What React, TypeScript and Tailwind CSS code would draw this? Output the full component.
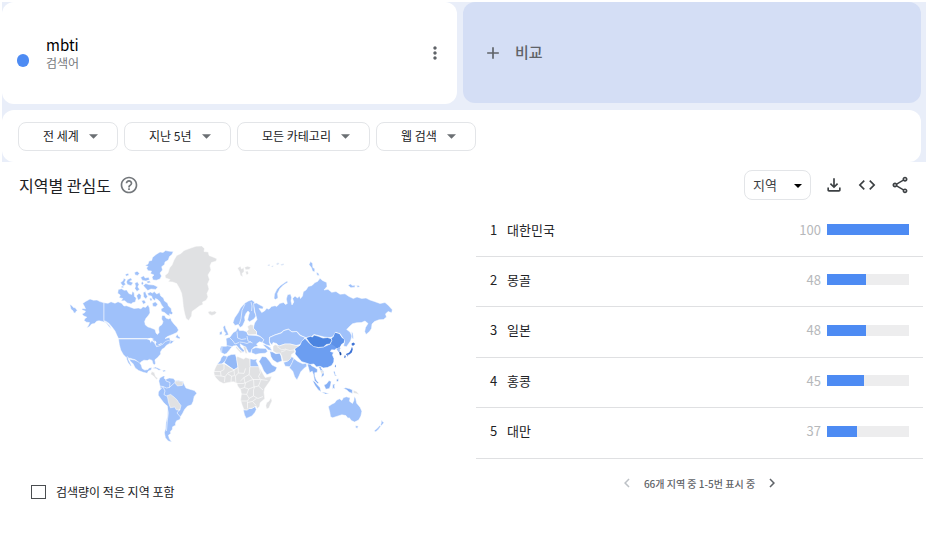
import React from "react";
import {
  MdAdd,
  MdChevronLeft,
  MdChevronRight,
  MdCode,
  MdHelpOutline,
  MdMoreVert,
  MdOutlineFileDownload,
  MdOutlineShare,
} from "react-icons/md";

const FILTERS = [
  { label: "위치", value: "전 세계" },
  { label: "기간", value: "지난 5년" },
  { label: "카테고리", value: "모든 카테고리" },
  { label: "검색 유형", value: "웹 검색" },
];

const REGIONS = [
  { rank: 1, name: "대한민국", score: 100 },
  { rank: 2, name: "몽골", score: 48 },
  { rank: 3, name: "일본", score: 48 },
  { rank: 4, name: "홍콩", score: 45 },
  { rank: 5, name: "대만", score: 37 },
];

function Caret({ className }: { className: string }) {
  return (
    <svg viewBox="0 0 10 5" aria-hidden="true" className={"pointer-events-none absolute " + className}>
      <path d="M0 0h10L5 5z" fill="currentColor" />
    </svg>
  );
}

function FilterSelect({ label, value }: { label: string; value: string }) {
  return (
    <div className="relative">
      <select
        aria-label={label}
        className="h-[29px] appearance-none rounded-lg border border-[#e3e5e8] bg-white pr-[38px] pl-6 text-xs text-[#202124]"
      >
        <option>{value}</option>
      </select>
      <Caret className="top-3 right-5 h-[5px] w-[9px] text-[#6b6f73]" />
    </div>
  );
}

function WorldMap() {
  return (
    <svg viewBox="69 240 328 208" role="img" aria-label="지역별 관심도 지도" className="ml-10 w-[328px]">
      <g fill="#9fc1fa" stroke="#fff" strokeWidth="0.5" strokeLinejoin="round">
        {/* Alaska and the tip of Chukotka */}
        <path d="M82.7 303.5L85.500 301.500 90 299 93.500 300.200 97 300 100 301.600 104 302.700V321.300L106.500 322.500 109.500 325.500 111.500 329 109 326.500 106 322.800 102.500 321.500 99 320.800 96.700 321.200 94.500 323.500 91.700 324 89.500 326.500 86.700 328 88.600 325 89.500 322.600 86.500 322.200 84 320.600 85 318.600 86.800 317.200 83.500 315.800 82 314 84.500 312.800 85.500 311.200 81.800 309.800 82.600 308.400 85.500 308.800 84.200 306z" />
        <path d="M69.800 304.600l2 .8 1.600 2 1.800.4 2.200 2.800-1.200.6-1 2-1.600-.6-.6-1.800-2-1.600z" />
        {/* Canada */}
        <path d="M104 302.700L108 303.300 111 301.800 115 303.200 118 301.800 121.700 303.300 124 306 126.700 305.800 130 307 134 308.500 138.300 308 141 308.800 143 306.700 145.500 307.400 148 304.800 149.600 308 150 313 148 316 146 318.300 144.600 321.500 145.400 325 148 327 150 327.500 152.500 328.600 155 329.400 156 333 157.300 334.400 159.200 332.600 158.600 329 159 326.700 162 324.500 163 321.700 161.600 319 162 315.500 164.500 315.500 166 318 168.500 319 170.500 318 171.700 321 174 324 177 327.300 178.500 330 177 332.500 172.500 334.500 167.500 336.500 165 338.500 169.500 337.500 170.200 340.200 173 341 175 340 171.500 343.600 169 344 169.500 341.800 166.500 342.500 162.500 344.500 158.500 346.400 155.800 345.800 154.500 341.500 151.500 339.500 147 338.600H118.500L117 335.500 115 331 112 327 108.800 323.200 106 321.400 104 320.800z" />
        <path d="M175.500 337.300l1.800-3.300 1 2.200 1.800 1-.4 1.700-2.200-.7z" />
        {/* Arctic archipelago */}
        <path d="M145 265.500L148 264 149 261 151.700 260.400 152.500 257.500 156 254.500 160 252 163 252.500 165.500 250.600 169.500 251.200 173.300 251.500 172 254.500 169.500 256.500 168.300 260 165 262 164.500 264.500 161.700 266.700 162.500 270 160 273 161.500 276 160 279 156.500 280.200 153 280 152 277 154 275 150.500 273.500 151.500 271 148 270.800 146.500 268 148 266.500z" />
        <path d="M118.300 289.500l3.400-.8 2.400 1.600 2.600-.4 2.200 3.600 2.800 1 .6-3 1.800 1 .4 4 1.800 1.400-1 4.200-2.800.6-1.200 1.400-4-1.200-2.600-2.200-3.600.2 1.600-2.400-3.600-.8 1.200-2.600-2.600-1.800z" />
        <path d="M147.500 293.500L150.300 291.900 152.500 293 154.200 291.500 156.700 294 159.500 292.600 160.800 296 163.500 298 164.500 301 167.500 303 168.500 306 171.200 308.500 171.600 311.500 173 313 171.500 314.500 169.500 313.800 170 316 167.500 315 164.500 312.500 161.500 311.500 161 309 163.500 307.500 161.500 305 159.800 301.500 157.500 299.500 155.500 298.500 155 300.800 152.500 298.800 151.500 296 148.500 295.500z" />
        <path d="M120.500 282.800l2.600-2.200.6-2.400 2.200 1.200-1.400 3 1.200 2-2.800 1.800zM127.600 279.500l3.200-1.600 1.400 2-2.600 1.400 3.600 1.400-2.200 3-3.600-1.200-1-2.600zM134.500 272.600l2.600-1.400 2.400 2-1.600 2.200-2.800-.4zM140.600 277.600l3-1.800 1.600 2.200 3.400-.8 1 2.600-3.600 1.200-3.600-.6zM134.800 283.200l2.600-1.400 1.600 2.800-1.200 2.400 1.800 2.200-2.600 2.200-2.200-2.800.8-2.400zM143.200 285.600l2.600-2 3 1 5 .4 4 2-2 2.400-4.800-.4-3.200 1.600-2-2.200zM136.600 295.800l2.400-2.600 2.200 2-.4 3.200-2.600 1.800zM143.200 292.400l2.200-.8.8 2.600 1.400 2.400-1.800 2.400-2.200-2.200zM141.500 300.800l2.800-.8 1.600 2.800-2.600 1.400zM152.200 303.600l3-1.800 2.600 2.400-2 2.600-2.800-.4zM125.200 274.400l2.800-1.200 1 1.800-2.600 1.200z" />
        <path d="M146.500 281.500l3-.8 1.200 1.800-3 .8zM141 283l1.600-1.400 1 2-1.400 1.600zM149.500 298.500l1.800-.6 1 2.400-1.800.6zM121 286.500l2-.6 1 1.400-2 .6z" />
        {/* United States */}
        <path d="M118.500 339h28l4.400.8 3.400 2.800 2.200 4 2.600-.6 3.200-1.600 3-2.800 2.800-1.200 2.400.6-.6 2.200-3.600 2.200-1.800 2.400-2.400 1.400-1.600 2.800.2 2-3 3.400-2.800 2.400.6 3.600-1 1.600-1.600-1.600-.8-3-2.600-1-2.200 1.200-3.400-.4-3 1.800-1.400 2.400-3.800-4.400-5-1.600-4-.4-3.400-3.400-2.600-4.600-1.400-5.400z" />
        {/* Mexico, Cuba and Hispaniola */}
        <path d="M127 356.500l3.200 2.800 4.600.8 4 2 2.400 2.800 1 3.600 2.600 1.600 3.200-.6 1-1.600 3-.4-1 2.600-2.600 1-1.200 2.200-4-1-4.600-1.800-3.400-2.600-2-4-3-3-1.200-2.600-1 .4 1.600 3.400 1.800 3.600-.8.4-2.600-3.600-1.400-3.400z" />
        <path d="M152.600 368.300l2.800-1.200 3.600 1.400 2.400 1.400-2.600.4-2.400-1.600zM162.500 370.500l2-.4 1.400 1-2.600.8z" />
        {/* South America */}
        <path d="M158.800 381l1-3 3.400-2 1.800.2-1 2 2 1 3.200-1.200 4.200.4 1.800 2.400 3-.4 5 1.200 1 3 1.800 3.400 3.800 1.200 4.600 1.400 2.400 2.600-2.600 3.200-1 4.800-1.600 3.600-4.200 1.400-2.800 3.200-2 4-2 3.200-.6 2.800-3.400 1.400-1.200 2.400.2 2-3 1.600-.2 2.400-2 2.400.4 2-2.400 1.600 1 3.600 2.400 3.200-3.600-1-2.800-3.200-1-5 1.200-4.400.4-6 1.400-6 .2-5-.4-5.400-3.600-3.400-2.800-3.800-2.600-3.600.2-3.200 2.200-3.200z" />
        {/* Maghreb, Egypt and South Africa */}
        <path d="M223.400 355.500l3.300.8 1.500 3-4 2.600-2.400 2.200-4.600.2 3-3.600 1-3z" />
        <path fill="#94b9f7" d="M227.600 356l3.600-1.400 4-.4 1.600 4.600 1.200 8.600-4.200 2.400-9.600-7z" />
        <path d="M250 358.700l3.500.7 3.800-.3-1.200 2 3 5.800H250zM243.300 409.800l3.600.2 1.600-1.400 3.200-.2 3.400-2 1.200 3.200-1.400 2.800-3 3.600-5.600 2.400-1.800-3.400z" />
        {/* Scandinavia */}
        <path d="M233 322.500L234.500 318 238.300 312.500 240.500 308 245 303 248.500 301 251.700 300 254.500 302 254 307 254.500 312 256 316 254 319 249.500 321.800 247.600 320 248.500 316 249.500 312.800 248 311 246 313.500 244.600 317 245 320.500 242.500 326 240 327.500 238.400 324.500 235 325.500z" />
        {/* British Isles */}
        <path d="M223 327l2-1.800.8 3.200 1.800 3.600 1 2.800-4.200 1 1.400-2.600-1.600-1.800zM219.500 332.600l2.400-1.600.2 3.200-2.400.8z" />
        {/* Continental Europe and the Caucasus */}
        <path d="M226 338.500L230 337 233.300 332.500 236 331 238 327.500 239.500 330.500 243 330.500 246.700 331.700 248 335 256 335.500 260 336.500 264 339.500 262.500 342.500 259.500 341.800 256.500 344 258 346 254 347 252 349.500 250.500 353 248.500 352.500 247 349.500 243.500 346 240 343.800 240.800 347 244.500 350.500 243 352.500 239.500 349 236.500 345.500 233 346 231 348 229.500 350 226.500 353.500 224.500 354.200 220.800 352.200 220 349 221 346.300 226.500 346.300V342.500z" />
        <path d="M262.500 344.500L266 345 270 347.500 272 350.500 268.500 350 266 347.800z" />
        {/* Turkey, Levant, Iran and Arabia */}
        <path d="M251.800 349l4-1.400 4 .6 6.200.2 1.600 3-2.400 1.800-5.400.4-4.200.8-4-1.600z" />
        <path fill="#8fb5f5" d="M269.800 351.500l3 .6 3 1.600 4-.6 1.400 3.200.8 4.600-4.800 1.800-4.200-2.600-2-3.400z" />
        <path fill="#94b9f7" d="M262 356.500l4 .4 3.600 4.400 2.600 3.800 4.800 2.400-1.800 3.800-8.200 3.400-3.200-3.600-2.400-5.600-2.400-4z" />
        {/* South Asia */}
        <path d="M283.600 362.500l4-1.400 3.400-4.600 3 1.600-1.200 4-2.800 4.600-4.800-.4z" />
        <path d="M289.400 367.800l2.600-5 1.800-4.400 4 3 5 2.400 3.600-.6.400 3-2.600 2-3.400 3.600-1.600 3.800-2.200 4.400-2.400-3.200-1.800-5.600z" />
        {/* Russia */}
        <path d="M253.500 303.500L256.500 303 260 305 263.300 306.700 262.800 309 259 308.500 261.700 312.500 264.500 311 266.700 308.300 269 309.200 271.500 306.500 275 305.700 276.800 306.500 280 303.300 283.500 302.500 285.500 304.500 287.300 303.500 286.300 299 287.500 294.800 290.500 294 291.600 297.500 291 301 292 305 293.800 302 292.600 298.500 295 296 297.500 298 299.500 296 300.500 298.500 302.500 296 303.300 291.700 306 290 308.300 286.500 312 285.500 315 282.500 317.500 281.500 320 278.300 322.500 280.500 326.700 282.500 327 286.500 324 290 328 289.300 331.700 292.300 336 291.500 340 294.200 345 293.800 349 296.500 353.300 298.500 357 297 361.700 298.500 366 298 370 300 374.500 301.500 380 303.500 385 302.500 388.500 305.500 392.300 309.800 391.700 312.700 388 311.500 385.500 314 386.500 317 383.500 319.500 379 319.800 374.500 321.500 372 324 371.500 328.500 369.500 331.500 366 334.500 364.700 331.500 365.500 327.500 368 323.500 365 321 361.500 322.500 356.700 322.700 352.500 323.800 349.500 326.500 346.700 329.500 350 332 352 336 350.500 341 346.500 346.700 343.500 346 344.500 342 343.500 339 340 333.500 335.500 332.300 333.300 336.500 330 337.600 324 337 318.300 335.500 314 334.500 311.500 336.500 306 337.700 300.500 335.300 297 331.500 292 331.800 288.300 329 283.500 330.500 281 332.700 275 334.800 269.500 337.300 269.300 342 270.500 346 266 344.800 262.500 342.500 263.800 339.500 260 336.200 256.500 334.500 256.500 331.500 253.300 328 254.600 323 257 319.500 255 312z" />
        <path d="M274 298.500L274.500 294 277 289 280.500 285.500 287 281 288 282.300 283.500 285 280 288.500 277.500 293.500 278 298 275.500 299.500zM309 264.600l1.600-3 2 1.800.2 4 2 1.400-.2 3.200-2.200-1-.8-3zM316.400 272.600l2 .4 1 2.400-2.400-.2zM348 285.200l2.600-1.200 1.600 1.400 3-.2-.4 2-4 .6zM356.500 285.600l2.400-.2 1 1.600-2.400.2z" />
        <path d="M351.700 331.500l1.200 2 .6 5.400-1.600-1z" />
        {/* Kazakhstan */}
        <path d="M269.500 337.500L275 335 281.500 333 283.500 330.800 288.300 329.300 292 332 296.500 331.500 300 335.500 305 337.500 303 341 300 344.500 296 345.500 290 344 285 344 279 346 276.500 343.500 273 342.500 272 345 269.500 342z" />
        {/* Franz Josef Land */}
        <path fill="#dce6f6" stroke="none" d="M267.500 265l2-.8.600 1.400-2 .4zM271 266.200l2.400-.6-.4 1.600zM276 264l2-1.600 1.400 1.400-2 1.200zM280.500 264.400l3-.8.4 1.400-2.400.4z" />
        {/* Indochina and the islands */}
        <path fill="#86b0f5" d="M307.500 364.500l2.400-1.400 1.600 2.600 3 1.600 3 2.200-.4 3-2.400.2.200 3.600 1.400 3.800 2.600 3-1.400.4-3-3-1-5.800-1.200-3.400-2.600 1.200-1-4zM318.500 366.400l2.800-.6-.2 2.400 2.400 3 .6 4-2.800 2.200.6-3.200-1.400-3.600zM312.500 380.500l2.400 1.200 2.400 3 2.600 2.800 1.200 4.200-2.800-1.800-3.400-4.600zM321.400 392l3.600.4 4.200 1.400-3.800.2zM324 385l2.600-1.200 2.400-3.200 2.200.8-.6 3.600-1.200 3.600-3.600.6zM332.700 384.500l2.600-.6-1 1.600.6 3.600-1.400-1-.8 1.400zM333.500 371.800l1.400-.6.4 3.400 1.800 1.400-2.200-.2zM336.200 380l2-1.400.4 2.400-1.600.8zM343.500 388.200l2.400-.4 3.800 1 2.600 1v3.600l-3.400-1.400-2-2z" />
        {/* Australia and New Zealand */}
        <path d="M328.300 406.600l3.400-2.400 3-1.400 1.800-2.600 3-1.400 2.400 1.600 1.400-2.600 3-1 3.800 1-.6 3.400 3 2.200 1.400-3 .4-4 1.400 2 1 4.800 3.400 4 1.800 4-1 4.800-2.200 4-4.200 2-3.200-1.600-2-2.600-1.400.4-2-2.600-4-.8-4.600 1.400-4.600 1.600-2.200-1-.6-4zM355.300 425.800l3 .2-.8 2.200-1.600-.2zM381.400 419.800l1.200 1.800 1.400 1-2.400 3-1-.4.6-2.200zM379.800 425.600l1 .6-2.400 3.200-2.600 2.400-1.800-.8 3.200-2.800z" />
      </g>
      {/* China and Taiwan */}
      <path
        d="M294.300 348.600L297 346.500 300 345.200 301.500 341.500 305 338.300 310 343.800 318.300 347.600 325 346.300 330 344 332 340 331.500 338.500 333.800 336.500 335 332.700 339.300 334 342 338 344 339.300 343.800 342.500 341.500 344 339.500 347.500 336.700 348.300 334.500 350 331.500 349.800 330.500 351.500 333.500 352.500 332.500 355 334 358.500 333.800 362 331.700 365.500 327.500 367.500 323.300 368 320 366.300 316.500 367 313.800 364 310 364.500 306 363 301.700 361.700 298 357.500 295 354 295.500 351z"
        fill="#6c9ef1"
        stroke="#fff"
        strokeWidth="0.6"
      />
      <path d="M335 332.700L339.300 334 342 338 344 339.300 343.800 342.500 341.500 344 339.500 347.500 336.700 348.300 334.500 346 331 344 332 340 331.500 338.500 333.800 336.500z" fill="#5c91e8" />
      <path d="M334.700 366.200l1-1.600.2 2.800z" fill="#5c91ee" />
      <path
        d="M306 337.700L310.500 336.300 312.500 337 314 335 318.500 336.300 323 338 327.500 337.500 330.500 338.500 332 340 330 344 326.500 344.500 323.500 347 318.300 347.500 313.500 346.500 310 343.500z"
        fill="#4b84e0"
        stroke="#fff"
        strokeWidth="0.6"
      />
      <path d="M336.500 349L339.500 346.800 340.600 348.200 339.400 350 340.600 351.400 338.500 352z" fill="#9fc1fa" />
      <path d="M339.200 352l1.800.2.600 2.400-1.600 1z" fill="#1c4fa8" />
      <path d="M351.600 343.400l1.800-1 1.800 1.600-2 1.800-1.400-.6zM352 346.800l.8 2.400-1 3.400-2.400 1.800-3 .6-.4-1 3.200-1.600 1.600-2.400zM344.500 355.500l1.400.2-.8 2.600-.8-.6zM346.800 355.400l1.600-.2-.8 1.200z" fill="#3f74d6" />
      {/* Countries without enough data */}
      <g fill="#e0e1e3" stroke="#fff" strokeWidth="0.5" strokeLinejoin="round">
        <path d="M165 275.500L168 273 169.500 268 172 265 174 260 176.700 255.500 181 253.500 184 250.500 190 248.300 196 246.200 201.700 246 204.500 248.500 204 251.500 208.300 252 209 255.500 213 257 217 258.800 216 261.200 211.500 262.500 210 266 211 270 208 275 209.500 279.500 207.600 284 209 289 207 293.500 208 297 206 300.500 202.500 302 203 304.500 199.500 306 195.500 309 192 311.500 191.600 316 188.600 320.500 186 318.500 184.500 313 183.300 306.700 182.600 299.500 181.600 293.300 179.500 288.500 176.700 283.600 172.500 282 168.200 281.700 170 279.500 165.500 278z" />
        <path d="M207.800 312l2.400-1 1.600.8 3-.8 1.800 1.600-1.800 2-3 .8-2.400-1z" />
        <path d="M237.500 268l3-1.800 1 2.800 2.200-1.400.4 4-2 1.800.8 3.600-2.600-1.800-.6-3.200zM244.600 267.200l3-1 3.200 1-1.600 2.400-3.600.2zM245.400 271.600l2.400-.6.8 2.800-2 1.200z" />
        <path d="M247.500 326.500L250.500 324.500 253.300 325 253.500 328.500 256.500 331.500 256.500 334.500 248.500 334.800 246.800 331.500 248.500 329.500z" />
        <path d="M236.200 346l1.400 1.600 2 2.400 3 2-1.800 1.200-2.800-3-2.200-2.400zM243 346l3 1 .4 3 1 3.600-2-.4-1.400-3.600z" />
        <path d="M273 346.500L275 344.500 279 346 285 344 290 344 296 345.500 299.500 345.500 296 348 294 349.500 295 352 291.500 354.500 291 358 288 361 283 361.500 281.700 356 280 353 276 353 273 351z" />
        <path d="M281 352l4.500-1.600M285.500 349.200l4.500 1.400 4.500-.8M277 346.500l4.500 3.200 4.500-.5" fill="none" />
        <path d="M151.800 371.600l2.600 1 1 3.600 2.600 2.400-1.400.8-3.400-3.600-2.600-1.600z" />
        <path d="M167.200 395.600l3.400-1.200 3.400 2.600 3 2.800 1.600 2.600 2.400 3.200-1.200 4.600-3.600-.4-1.400-2.800-4.400.8-1.800-5z" />
        <path d="M175 381l3.600.2 4.800.8-1 3.400-5 .6-2-2.400z" />
        <path d="M217.200 364.300l7-.6 9.800 6.200 4-2.600-1.400-8.400.4-2.600 3.600 1.400 3 1.400 2.200-1.600 4 1.200.2 8h9l2.600 4.600 3.600 6.200 6.600-1.200-1.600 4.400-5.400 7.600-.8 4 .8 6.400-4.600 4-.6 3.600-2.400 2.400-1.200-2.600-3.600 2-3.200.4-1.600 1.400-3.600-.2-1.800-4.400-1.600-5 .8-6.400-.8-4.200-3-3.800-.8-3-3.400-1.200-5 .8-5 1-4-2-3.400-3.400-1.600-2.600-.6-3.400 1.400-4z" />
        <path d="M271 397.500l1 3.400-1.800 3.800-1.200 3.400-2.400.8-.8-3.200.8-3 2.400-1.600z" />
        <path d="M353.400 390.300l3.200 1.200 2.600 3-2.600-.8-3.200-.6z" />
        <path d="M320.300 371l2-.8 1 2.800-1.800.8z" />
      </g>
      {/* Borders */}
      <g fill="none" stroke="#fff" strokeWidth="0.6">
        <path d="M214 371.500h6.500l3.500-2v-6M220.500 371.500l.5 4.500-6.600-.5M221 376l4 .8 3-4 6-2.500M225 377l-.6 5M228 374l3.500 2-.5 6M234 370l.5 5.500-3 .8M238 367.500l.4 5.500-3 3 .4 6M238.400 373l5.600.4 1.600-5M249.800 367l-.6 7.500-5.200 3-3.600 3.500M249.200 374.500l3.800 5h7.500M259 367l1.500 5.500-2 4 2 3M244 377.500l1 5.500 5-2.500 3-1M237 383.500h6l2-.6M240 389l4.500-1.500 1-4.500M244.500 387.500l4 1.500 5.500-2-.5-7.500M254 387l4.500-1 4.500 4M258.500 386l2.500-6.500 6.500 1M240.700 394l6 .4 2-5.400M246.700 394.400l2.300 4 4.500-2.500v-6l1-3M240.500 401h7l1.500-2.600M253.500 396l4.500 2.500 5-2M247.500 401.500v7M247.500 402.600l5-1.200 3.500 4M252.500 401.400l4-3" />
        <path d="M165 377l1 4 4 1.500-.5 5M159 386l4 .5 3.500 1.500 3-.6 5.500-5M157 390l3.500-.6 2.500-3M163 387l2 4-1 3.600 3 1.600M166.700 405l1.600 8-1 8-.8 10M180 409l-3 4 3.500 4" />
        <path d="M245 304l-3 6.500-1 8-1.600 5.500M251 302l1 4-.4 5M226.500 345.500l5.500 1.200M229.500 337.500l3.500 3.500 2 3 4-1.500M237 331.500l.6 6.500 4 1.500 4.600-.8M239.500 342l4 .5 3.500 1 4-2M247 336l1 5 4.500 2M222 347l-.4 5" />
      </g>
      {/* Great Lakes */}
      <path d="M147.500 338.400l3.500-.6 3 1.200-2 1-1.200 3-1-2.600zM154.500 340l2 2.200-1 2.400zM157.500 345l3-1.600 2-.6-2.400 2z" fill="#fff" />
    </svg>
  );
}

function RegionTable() {
  return (
    <table className="h-[252px] w-full border-collapse text-[13px] text-[#202124]">
      <tbody>
        {REGIONS.map((region) => (
          <tr key={region.rank} className="border-b border-[#dfe0e2]">
            <td className="w-[31px] pb-1 pl-3.5">{region.rank}</td>
            <th scope="row" className="pb-1 text-left font-normal">
              {region.name}
            </th>
            <td className="pr-3.5 pb-1">
              <div className="flex items-center justify-end gap-1.5">
                <span className="text-[#b6b8bb]">{region.score}</span>
                <div className="h-[11px] w-[82px] bg-[#ededee]">
                  <div className="h-full bg-[#4d8bf3]" style={{ width: `${region.score}%` }} />
                </div>
              </div>
            </td>
          </tr>
        ))}
      </tbody>
    </table>
  );
}

export default function App() {
  return (
    <main className="min-h-screen bg-white px-0.5 pt-0.5 font-['Noto_Sans_CJK_KR',sans-serif] text-[#202124]">
      <div className="bg-[#e9eef9] pr-[5px]">
        <div className="grid grid-cols-[455fr_458fr] gap-1.5">
          <section className="flex h-[102px] items-center rounded-xl bg-white pr-3 pl-[15px]">
            <span className="mt-3.5 h-[13px] w-3 rounded-full bg-[#4d8bf3]" />
            <div className="ml-[17px] grow">
              <h1 className="text-[15px] leading-5 text-black">mbti</h1>
              <p className="text-xs leading-4 text-[#777a7d]">검색어</p>
            </div>
            <button type="button" aria-label="옵션 더보기" className="text-[#5f6368]">
              <MdMoreVert size={20} />
            </button>
          </section>
          <button
            type="button"
            className="flex h-[101px] items-center gap-3 rounded-xl bg-[#d4def5] pl-5 text-left text-[15px] font-medium text-[#5f6368]"
          >
            <MdAdd size={20} />
            비교
          </button>
        </div>
        <div className="mt-1.5 flex h-[52px] items-center gap-1.5 rounded-xl bg-white pl-4">
          {FILTERS.map((filter) => (
            <FilterSelect key={filter.label} label={filter.label} value={filter.value} />
          ))}
        </div>
      </div>

      <section className="pr-[3px]">
        <header className="flex h-[46px] items-center pr-[13px] pl-[17px]">
          <h2 className="text-base">지역별 관심도</h2>
          <button type="button" aria-label="도움말" className="ml-2 text-[#73777b]">
            <MdHelpOutline size={20} />
          </button>
          <div className="ml-auto flex items-center gap-[13px] text-[#3c4043]">
            <div className="relative">
              <select
                aria-label="지역 구분"
                className="h-[30px] w-[67px] appearance-none rounded-lg border border-[#e3e5e8] bg-white pl-2 text-[13px]"
              >
                <option>지역</option>
              </select>
              <Caret className="top-[14px] right-[9px] h-1 w-2 text-black" />
            </div>
            <button type="button" aria-label="CSV 다운로드">
              <MdOutlineFileDownload size={20} />
            </button>
            <button type="button" aria-label="삽입">
              <MdCode size={20} />
            </button>
            <button type="button" aria-label="공유">
              <MdOutlineShare size={20} />
            </button>
          </div>
        </header>

        <div className="grid grid-cols-2 pl-[27px]">
          <div className="pt-8">
            <WorldMap />
            <label className="mt-9 ml-0.5 flex items-center gap-2.5 text-xs leading-4">
              <input type="checkbox" className="h-3.5 w-[15px] appearance-none border border-[#4a4d50] bg-white" />
              검색량이 적은 지역 포함
            </label>
          </div>
          <div className="-mt-px">
            <RegionTable />
            <nav aria-label="페이지" className="mt-[15px] flex items-center justify-center gap-2 text-[10px] font-medium text-[#5f6368]">
              <button type="button" aria-label="이전" disabled className="text-[#bdc1c6]">
                <MdChevronLeft size={18} />
              </button>
              <span>66개 지역 중 1-5번 표시 중</span>
              <button type="button" aria-label="다음">
                <MdChevronRight size={18} />
              </button>
            </nav>
          </div>
        </div>
      </section>
    </main>
  );
}
